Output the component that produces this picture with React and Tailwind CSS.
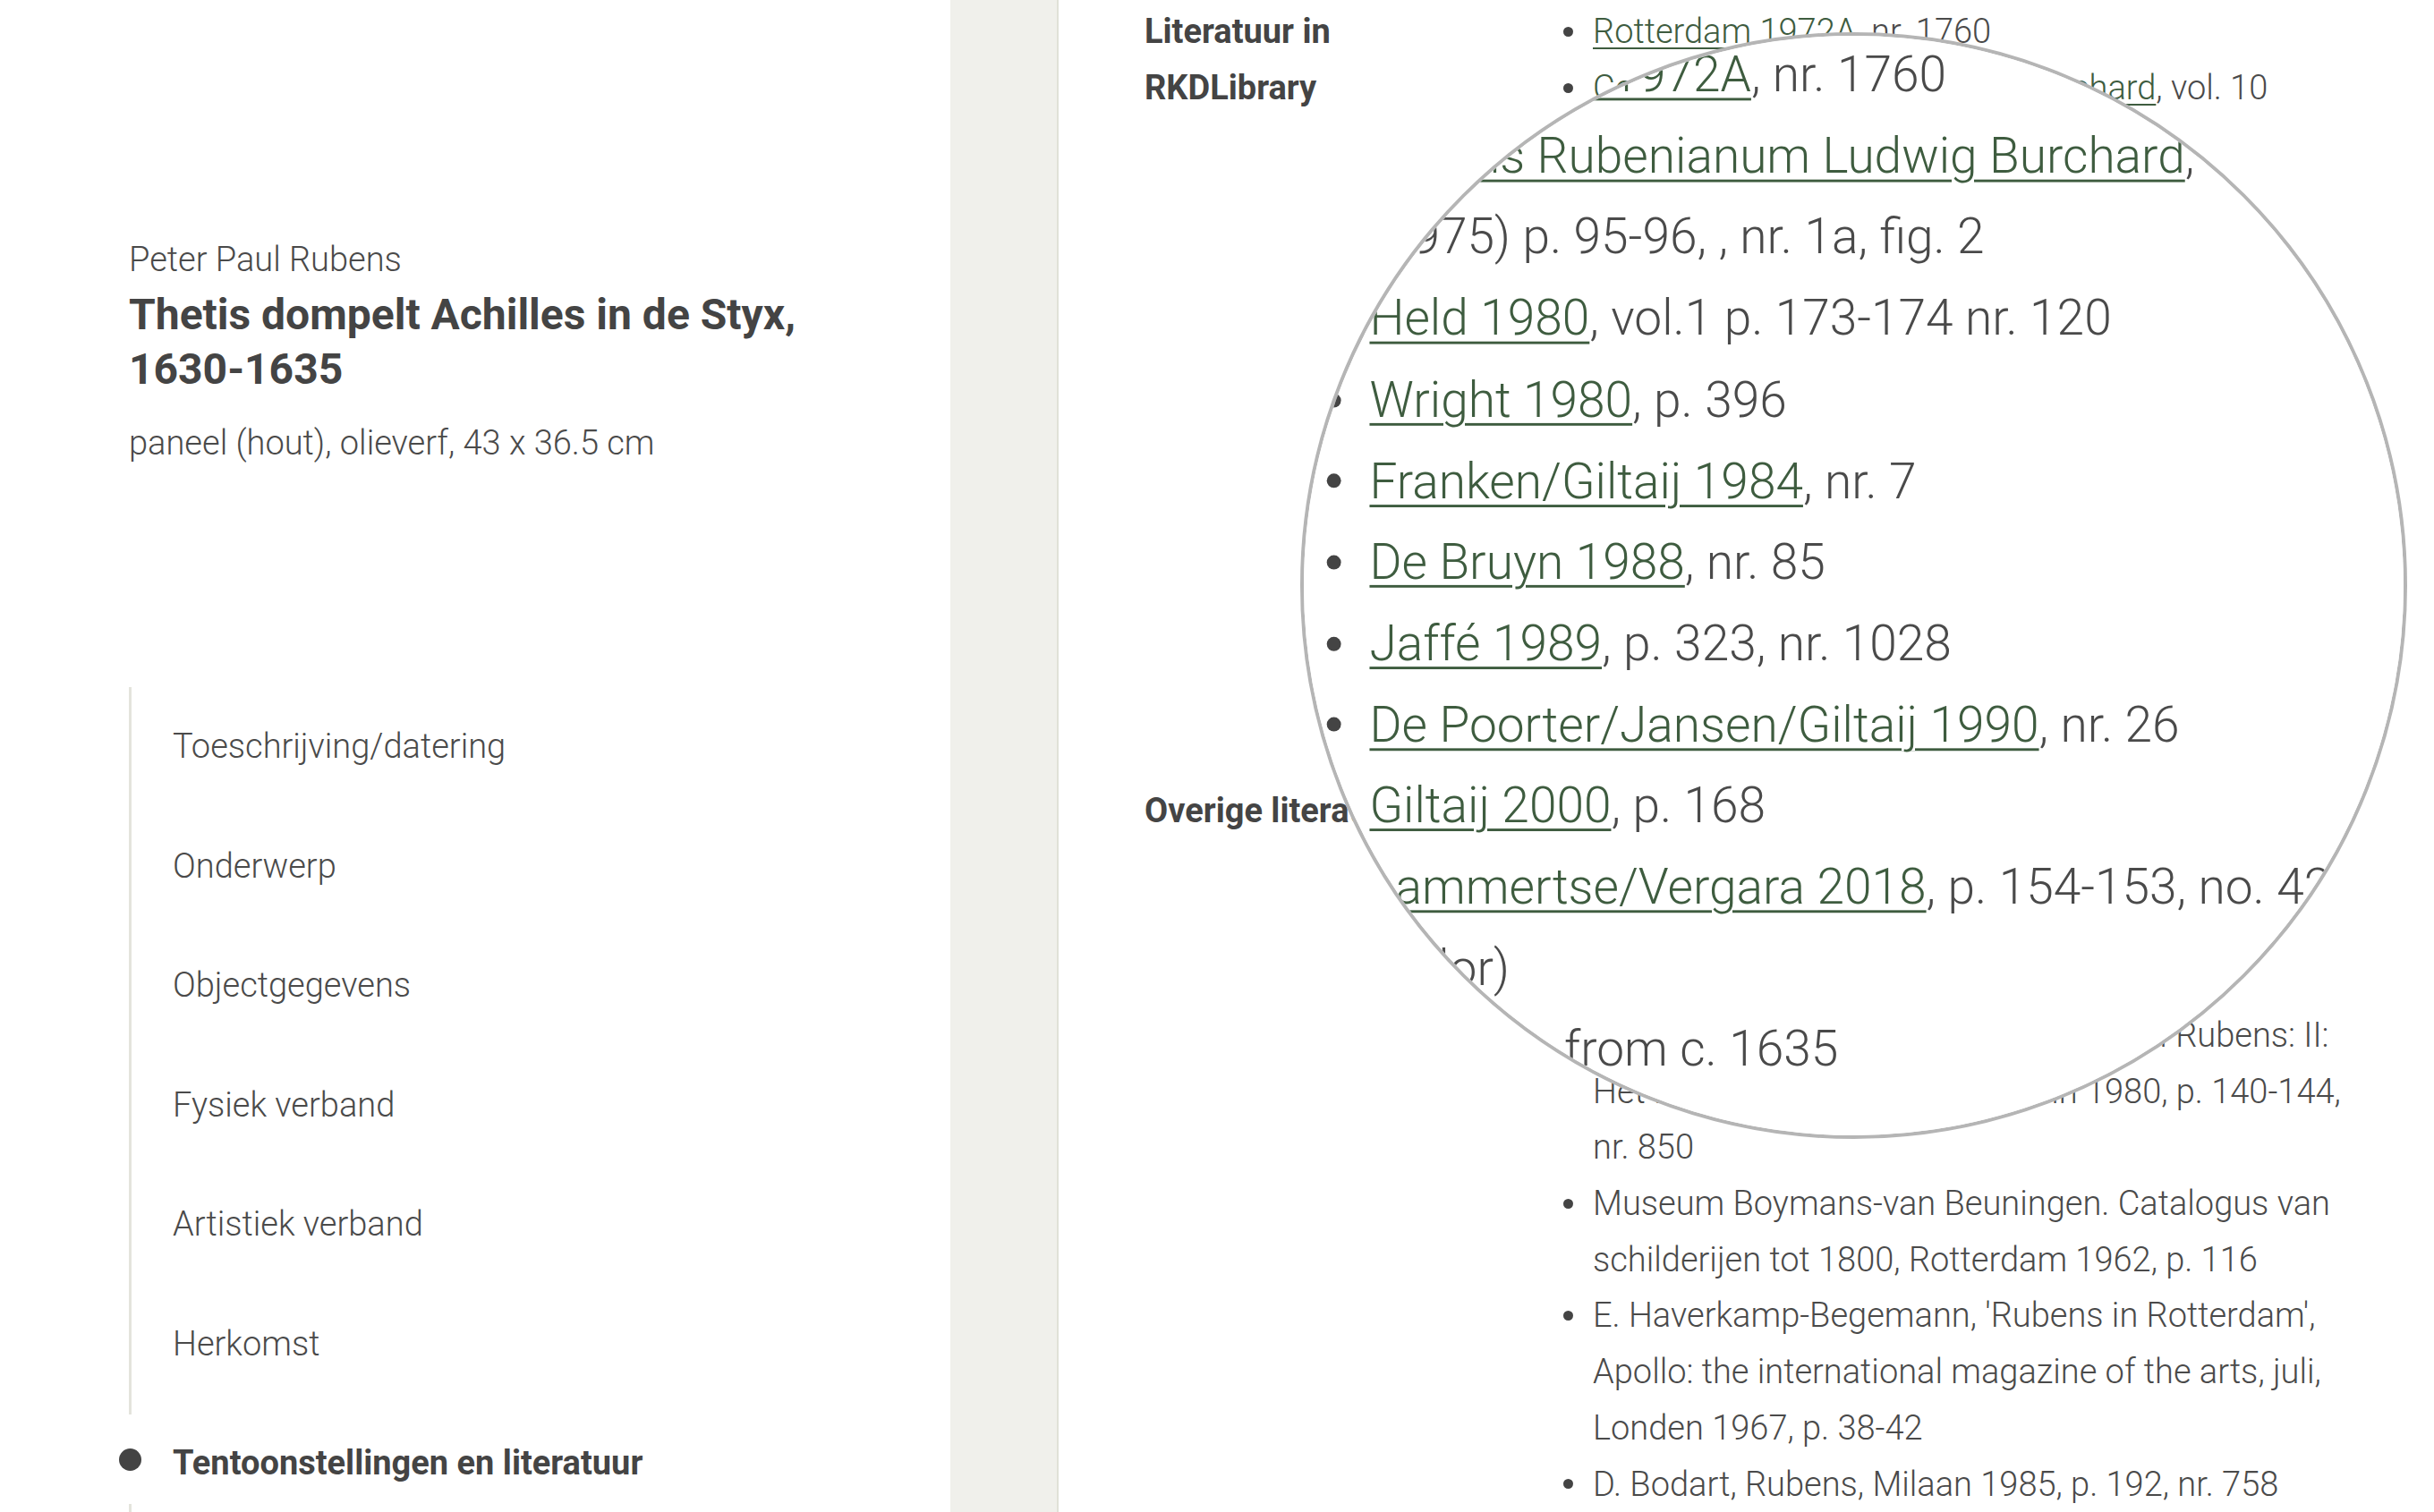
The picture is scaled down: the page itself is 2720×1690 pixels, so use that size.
import React from "react";

const navItems = [
  "Toeschrijving/datering",
  "Onderwerp",
  "Objectgegevens",
  "Fysiek verband",
  "Artistiek verband",
  "Herkomst",
];

// each item is a list of lines, each line a list of parts ({ link } or plain text)
const rkdLibrary = [
  [[{ link: "Rotterdam 1972A" }, ", nr. 1760"]],
  [
    [{ link: "Corpus Rubenianum Ludwig Burchard" }, ", vol. 10"],
    ["(1975) p. 95-96, , nr. 1a, fig. 2"],
  ],
  [[{ link: "Held 1980" }, ", vol.1 p. 173-174 nr. 120"]],
  [[{ link: "Wright 1980" }, ", p. 396"]],
  [[{ link: "Franken/Giltaij 1984" }, ", nr. 7"]],
  [[{ link: "De Bruyn 1988" }, ", nr. 85"]],
  [[{ link: "Jaffé 1989" }, ", p. 323, nr. 1028"]],
  [[{ link: "De Poorter/Jansen/Giltaij 1990" }, ", nr. 26"]],
  [[{ link: "Giltaij 2000" }, ", p. 168"]],
  [
    [{ link: "Lammertse/Vergara 2018" }, ", p. 154-153, no. 42"],
    ["(color)"],
    ["painting, from c. 1635"],
  ],
];

const overige = [
  [["J.S. Held, The oil sketches of Peter Paul Rubens,"], ["Princeton 1980, vol. 1"]],
  [["F. Baudouin, Rubens et son siècle,"], ["Antwerpen 1972, p. 212"]],
  [
    ["J. Müller Hofstede e.a. (ed.), Peter Paul Rubens: II:"],
    ["Het Rubenshuis Antwerpen/Köln 1980, p. 140-144,"],
    ["nr. 850"],
  ],
  [["Museum Boymans-van Beuningen. Catalogus van"], ["schilderijen tot 1800, Rotterdam 1962, p. 116"]],
  [
    ["E. Haverkamp-Begemann, 'Rubens in Rotterdam',"],
    ["Apollo: the international magazine of the arts, juli,"],
    ["Londen 1967, p. 38-42"],
  ],
  [["D. Bodart, Rubens, Milaan 1985, p. 192, nr. 758"]],
];

function Line({ parts }) {
  return (
    <div className="whitespace-nowrap">
      {parts.map((p, i) =>
        typeof p === "string" ? (
          <span key={i}>{p}</span>
        ) : (
          <a
            key={i}
            className="text-[#3e5c3f] underline decoration-[2px] underline-offset-[5px]"
          >
            {p.link}
          </a>
        ),
      )}
    </div>
  );
}

function Item({ lines }) {
  return (
    <li className="flex">
      <span className="flex h-[62.7px] w-[40px] shrink-0 items-center pl-[7px]">
        <span className="h-[11px] w-[11px] rounded-full bg-[#444]" />
      </span>
      <div>
        {lines.map((parts, i) => (
          <Line key={i} parts={parts} />
        ))}
      </div>
    </li>
  );
}

function Section({ label, items, className }) {
  return (
    <section className={"grid grid-cols-[461px_1fr] " + (className || "")}>
      <h3 className="font-bold text-[#444]">{label}</h3>
      <ul className="font-light">
        {items.map((lines, i) => (
          <Item key={i} lines={lines} />
        ))}
      </ul>
    </section>
  );
}

function Page() {
  return (
    <div className="flex h-[1690px] w-[2720px] overflow-hidden bg-white font-['Roboto',sans-serif] text-[38px] text-[#4a4a4a]">
      <aside className="w-[1062px] shrink-0 pl-[144px] pt-[263px]">
        <p className="font-light leading-[54px]">Peter Paul Rubens</p>
        <h1 className="mt-[4px] text-[48px] font-bold leading-[61px] text-[#444]">
          Thetis dompelt Achilles in de Styx,
          <br />
          1630-1635
        </h1>
        <p className="mt-[25px] font-light leading-[54px]">
          paneel (hout), olieverf, 43 x 36.5 cm
        </p>

        <nav className="mt-[246px]">
          {navItems.map((item) => (
            <div
              key={item}
              className="flex h-[133.5px] items-center border-l-[3px] border-[#e4e4dc] pl-[46px] font-light"
            >
              {item}
            </div>
          ))}
          <div className="flex h-[156px]">
            <div className="flex w-[3px] flex-col items-center">
              <div className="h-[12px] w-[3px] bg-[#e4e4dc]" />
              <div className="flex h-[100px] items-center justify-center">
                <span className="h-[25px] w-[25px] shrink-0 rounded-full bg-[#444]" />
              </div>
              <div className="w-[3px] flex-1 bg-[#e4e4dc]" />
            </div>
            <div className="flex h-[133.5px] items-center pl-[46px] font-bold text-[#444]">
              Tentoonstellingen en literatuur
            </div>
          </div>
        </nav>
      </aside>

      <div className="w-[121px] shrink-0 border-r-2 border-[#e0e1d7] bg-[#f0f0eb]" />

      <main className="flex-1 pl-[96px] pr-[95px] pt-[4px] leading-[62.7px]">
        <Section
          label={
            <>
              Literatuur in
              <br />
              RKDLibrary
            </>
          }
          items={rkdLibrary}
        />
        <Section className="mt-[56px]" label="Overige literatuur" items={overige} />
      </main>
    </div>
  );
}

export default function App() {
  return (
    <div className="relative h-[1690px] w-[2720px] overflow-hidden">
      <Page />
      {/* magnifying glass: a scaled copy of the page clipped to a circle */}
      <div className="absolute left-[1453px] top-[36px] h-[1237px] w-[1237px] overflow-hidden rounded-full border-4 border-[#b5b5b5] bg-white">
        <div className="absolute left-[-1457px] top-[-40px] h-[1690px] w-[2720px] origin-[2337px_-73px] scale-[1.448]">
          <Page />
        </div>
      </div>
    </div>
  );
}
